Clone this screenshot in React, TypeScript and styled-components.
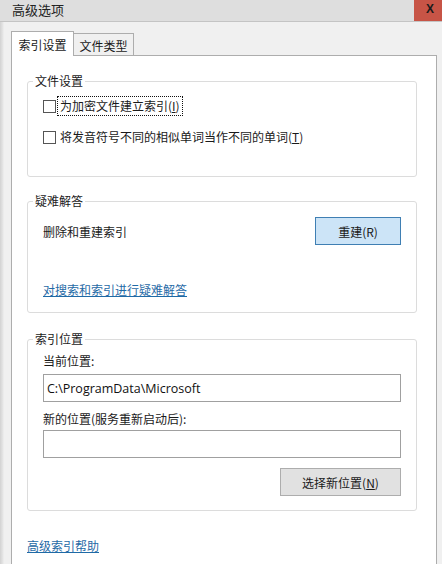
import React from 'react';
import styled, { createGlobalStyle } from 'styled-components';

const GlobalStyle = createGlobalStyle`
  html, body {
    margin: 0;
    padding: 0;
    background: #f0f0f0;
  }
  * {
    box-sizing: border-box;
  }
`;

const FONT = `"Noto Sans CJK SC", "Microsoft YaHei", sans-serif`;

const Window = styled.div`
  width: 442px;
  height: 564px;
  overflow: hidden;
  display: flex;
  flex-direction: column;
  font-family: ${FONT};
  font-size: 12px;
  color: #1a1a1a;
  background: linear-gradient(to right, #d2d2d2 0, #e6e6e6 3px, #f0f0f0 4px);
`;

const TitleBar = styled.div`
  height: 22px;
  flex: none;
  display: flex;
  align-items: stretch;
  justify-content: space-between;
  background: #dedede;
  border-bottom: 1px solid #c4c4c4;
`;

const Title = styled.div`
  padding-left: 12px;
  font-size: 13px;
  line-height: 19px;
  color: #222;
`;

const CloseButton = styled.div`
  width: 28px;
  display: flex;
  align-items: center;
  justify-content: center;
  background: #c75446;
  color: #1b1b1b;
  font-family: "Liberation Sans", Arial, sans-serif;
  font-weight: bold;
  font-size: 12px;
  padding-bottom: 4px;
  padding-left: 4px;
`;

const Body = styled.div`
  flex: 1;
  display: flex;
  flex-direction: column;
  padding: 9px 5px 0 11px;
`;

const TabStrip = styled.div`
  display: flex;
  align-items: flex-end;
  height: 25px;
  margin-bottom: -1px;
  position: relative;
  z-index: 1;
`;

const Tab = styled.div<{ $active?: boolean }>`
  display: flex;
  align-items: center;
  justify-content: center;
  border: 1px solid #adadad;
  font-size: 12px;
  width: ${({ $active }) => ($active ? '63px' : '60px')};
  height: ${({ $active }) => ($active ? '25px' : '23px')};
  background: ${({ $active }) => ($active ? '#ffffff' : '#f0f0f0')};
  border-bottom: ${({ $active }) => ($active ? 'none' : '1px solid #adadad')};
  border-left: ${({ $active }) => ($active ? '1px solid #adadad' : 'none')};
  padding-top: ${({ $active }) => ($active ? '0' : '2px')};
`;

const Panel = styled.div`
  flex: 1;
  background: #ffffff;
  border: 1px solid #adadad;
  border-bottom: none;
  padding: 25px 0 0 15px;
`;

const Group = styled.div<{ $height: number; $gap: number }>`
  position: relative;
  width: 390px;
  height: ${({ $height }) => $height}px;
  margin-top: ${({ $gap }) => $gap}px;
  border: 1px solid #dcdcdc;
  border-radius: 3px;
  display: flex;
  flex-direction: column;
`;

const Legend = styled.span`
  position: absolute;
  top: -9px;
  left: 5px;
  padding: 0 2px;
  background: #ffffff;
  line-height: 16px;
`;

const CheckList = styled.div`
  display: flex;
  flex-direction: column;
  gap: 15px;
  padding: 16px 0 0 15px;
`;

const CheckRow = styled.label`
  display: flex;
  align-items: center;
  gap: 3px;
  height: 16px;
  line-height: 16px;
`;

const Box = styled.span`
  width: 13px;
  height: 13px;
  border: 1px solid #555;
  background: #fff;
  flex: none;
`;

const CheckText = styled.span<{ $focused?: boolean }>`
  padding: 0 1px;
  outline: ${({ $focused }) => ($focused ? '1px dotted #111' : 'none')};
  outline-offset: 1px;
`;

const Key = styled.span`
  text-decoration: underline;
`;

const TroubleRow = styled.div`
  display: flex;
  align-items: center;
  justify-content: space-between;
  padding: 15px 15px 0 15px;
`;

const Button = styled.div<{ $primary?: boolean; $width: number }>`
  width: ${({ $width }) => $width}px;
  height: 28px;
  display: flex;
  align-items: center;
  justify-content: center;
  background: ${({ $primary }) => ($primary ? '#cce4f7' : '#e1e1e1')};
  border: 1px solid ${({ $primary }) => ($primary ? '#3f7fb3' : '#adadad')};
  color: #1a1a1a;
`;

const Link = styled.a<{ $indent?: number; $gap?: number }>`
  display: block;
  width: max-content;
  line-height: 16px;
  color: #1f6aa6;
  text-decoration: underline;
  margin-left: ${({ $indent }) => $indent ?? 0}px;
  margin-top: ${({ $gap }) => $gap ?? 0}px;
  cursor: pointer;
`;

const LocationBody = styled.div`
  display: flex;
  flex-direction: column;
  padding: 13px 15px 0 15px;
`;

const FieldLabel = styled.div<{ $gap?: number }>`
  line-height: 16px;
  margin-top: ${({ $gap }) => $gap ?? 0}px;
`;

const TextField = styled.div<{ $gap: number }>`
  height: 28px;
  margin-top: ${({ $gap }) => $gap}px;
  border: 1px solid #a0a0a0;
  background: #fff;
  padding-left: 3px;
  display: flex;
  align-items: center;
  font-family: "Open Sans", ${FONT};
  font-size: 12.5px;
  color: #111;
`;

const ButtonRow = styled.div`
  display: flex;
  justify-content: flex-end;
  margin-top: 10px;
`;

export default function App() {
  return (
    <>
      <GlobalStyle />
      <Window>
        <TitleBar>
          <Title>高级选项</Title>
          <CloseButton>X</CloseButton>
        </TitleBar>
        <Body>
          <TabStrip>
            <Tab $active>索引设置</Tab>
            <Tab>文件类型</Tab>
          </TabStrip>
          <Panel>
            <Group $height={96} $gap={0}>
              <Legend>文件设置</Legend>
              <CheckList>
                <CheckRow>
                  <Box />
                  <CheckText $focused>
                    为加密文件建立索引(<Key>I</Key>)
                  </CheckText>
                </CheckRow>
                <CheckRow>
                  <Box />
                  <CheckText>
                    将发音符号不同的相似单词当作不同的单词(<Key>T</Key>)
                  </CheckText>
                </CheckRow>
              </CheckList>
            </Group>

            <Group $height={112} $gap={24}>
              <Legend>疑难解答</Legend>
              <TroubleRow>
                <span>删除和重建索引</span>
                <Button $primary $width={86}>重建(R)</Button>
              </TroubleRow>
              <Link $indent={15} $gap={37}>对搜索和索引进行疑难解答</Link>
            </Group>

            <Group $height={172} $gap={26}>
              <Legend>索引位置</Legend>
              <LocationBody>
                <FieldLabel>当前位置:</FieldLabel>
                <TextField $gap={5}>C:\ProgramData\Microsoft</TextField>
                <FieldLabel $gap={9}>新的位置(服务重新启动后):</FieldLabel>
                <TextField $gap={3} />
                <ButtonRow>
                  <Button $width={121}>
                    选择新位置(<Key>N</Key>)
                  </Button>
                </ButtonRow>
              </LocationBody>
            </Group>

            <Link $gap={27}>高级索引帮助</Link>
          </Panel>
        </Body>
      </Window>
    </>
  );
}
